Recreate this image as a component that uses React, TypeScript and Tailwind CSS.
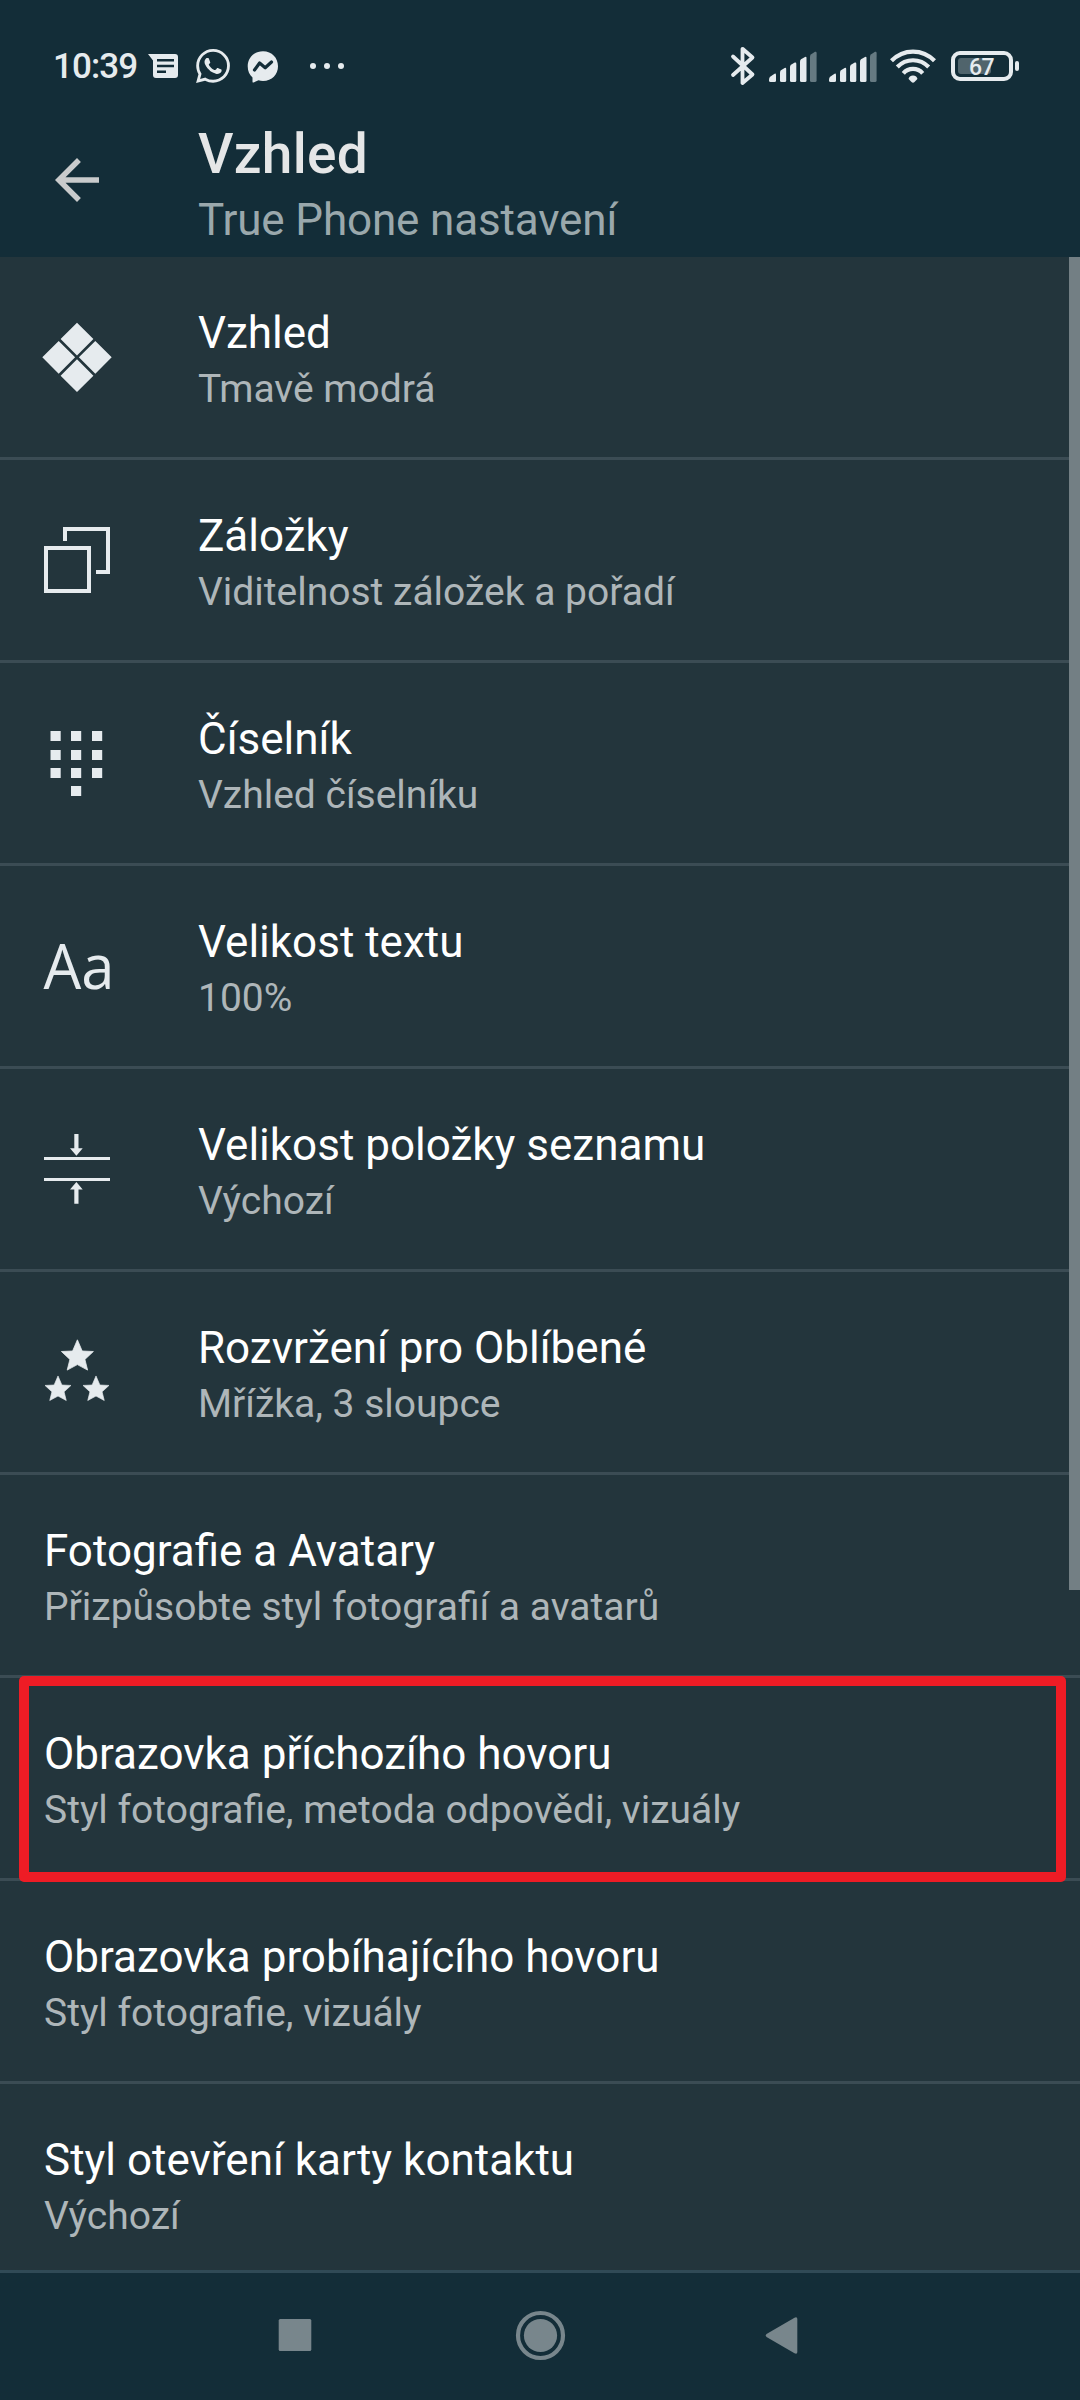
import type { ReactNode } from 'react';
import { SiWhatsapp } from 'react-icons/si';

type Setting = {
  title: string;
  summary: string;
  icon?: ReactNode;
  highlighted?: boolean;
};

const KEYPAD_DOTS = [
  [9.5, 4], [30, 4], [51, 4],
  [9.5, 23], [30, 23], [51, 23],
  [9.5, 41], [30, 41], [51, 41],
  [30, 59],
];

function RowIcon({ children }: { children: ReactNode }) {
  return (
    <svg viewBox="0 0 72 72" className="h-[72px] w-[72px] overflow-visible fill-[#e6ebee]">
      {children}
    </svg>
  );
}

const ThemeIcon = () => (
  <RowIcon>
    <path d="M36 1.7 52.4 18 36 34.4 19.6 18zM17.7 20 34.1 36.3 17.7 52.7 1.3 36.3zM54.3 20 70.7 36.3 54.3 52.7 37.9 36.3zM36 38.3 52.4 54.7 36 71 19.6 54.7z" />
  </RowIcon>
);

const TabsIcon = () => (
  <RowIcon>
    <g fill="none" stroke="#e6ebee" strokeWidth="4">
      <rect x="5" y="24" width="43" height="43" />
      <path d="M24 17V5H67V48H55" />
    </g>
  </RowIcon>
);

const KeypadIcon = () => (
  <RowIcon>
    {KEYPAD_DOTS.map(([x, y]) => (
      <rect key={`${x}-${y}`} x={x} y={y} width="10.2" height="10" />
    ))}
  </RowIcon>
);

const TextSizeIcon = () => (
  <RowIcon>
    <text
      x="2.5"
      y="58.5"
      fontSize="63"
      textLength="71"
      lengthAdjust="spacingAndGlyphs"
      className="font-['Open_Sans',sans-serif]"
    >
      Aa
    </text>
  </RowIcon>
);

const ItemSizeIcon = () => (
  <RowIcon>
    <path d="M3 24H69V27H3zM3 45H69V48H3z" />
    <path d="M33.3 1H37.5V15.3H41.7L35.4 22.7 29 15.3H33.3z" />
    <path d="M33.3 70.7H37.5V56.4H41.7L35.4 49 29 56.4H33.3z" />
  </RowIcon>
);

const STAR = 'M0-16.6 4.8-5.4 16-4.9 7.5 3 10.2 13.7 0 8.2-10.2 13.7-7.5 3-16-4.9-4.8-5.4z';

const StarsIcon = () => (
  <RowIcon>
    <g stroke="#e6ebee" strokeWidth="0.8" strokeLinejoin="round">
      <path d={STAR} transform="translate(36.4 20.4)" />
      <path d={STAR} transform="translate(17 53.4) scale(.81)" />
      <path d={STAR} transform="translate(55 53.4) scale(.81)" />
    </g>
  </RowIcon>
);

const SETTINGS: Setting[] = [
  { title: 'Vzhled', summary: 'Tmavě modrá', icon: <ThemeIcon /> },
  { title: 'Záložky', summary: 'Viditelnost záložek a pořadí', icon: <TabsIcon /> },
  { title: 'Číselník', summary: 'Vzhled číselníku', icon: <KeypadIcon /> },
  { title: 'Velikost textu', summary: '100%', icon: <TextSizeIcon /> },
  { title: 'Velikost položky seznamu', summary: 'Výchozí', icon: <ItemSizeIcon /> },
  { title: 'Rozvržení pro Oblíbené', summary: 'Mřížka, 3 sloupce', icon: <StarsIcon /> },
  { title: 'Fotografie a Avatary', summary: 'Přizpůsobte styl fotografií a avatarů' },
  {
    title: 'Obrazovka příchozího hovoru',
    summary: 'Styl fotografie, metoda odpovědi, vizuály',
    highlighted: true,
  },
  { title: 'Obrazovka probíhajícího hovoru', summary: 'Styl fotografie, vizuály' },
  { title: 'Styl otevření karty kontaktu', summary: 'Výchozí' },
];

function SignalBars() {
  return (
    <svg viewBox="0 0 48 32" className="h-8 w-12 fill-[#e6ebee]">
      <path d="M0 28.5Q0 26.8 1.5 25.6L5.2 22.9Q7 22 7 24V29.5Q7 31 5.5 31H1.5Q0 31 0 29.5z" />
      <path d="M11 21.5Q11 20 12 19.3L15.6 17Q17.2 16.3 17.2 18V29.5Q17.2 31 15.7 31H12.5Q11 31 11 29.5z" />
      <path d="M21 16Q21 14.5 22 13.8L25.8 11.6Q27.3 11 27.3 12.800V29.5Q27.3 31 25.8 31H22.5Q21 31 21 29.5z" />
      <path d="M31 10.500Q31 9 32 8.300L36 6Q37.5 5.400 37.5 7V29.5Q37.5 31 36 31H32.5Q31 31 31 29.5z" />
      <path
        d="M41 5.500Q41 4 42.2 3.200L46 .8Q47.6.2 47.6 2V29.5Q47.6 31 46 31H42.5Q41 31 41 29.5z"
        className="fill-[#667a82]"
      />
    </svg>
  );
}

function StatusBar() {
  return (
    <div className="flex h-[104px] items-start pt-[46px] pl-[53px] text-[#e6ebee]">
      <span className="mt-px w-[95px] text-[35px] leading-10 font-medium tracking-[-0.9px] whitespace-nowrap">
        10:39
      </span>
      <svg viewBox="0 0 30 24" className="mt-2 h-6 w-[30px] fill-current">
        <path
          fillRule="evenodd"
          d="M0 0H27Q30 0 30 3V21Q30 24 27 24H8Q5 24 5 21V6.5zM9 5V7.5H26V5zM9 10.7V13.2H26V10.7zM9 16.5V19H18V16.5z"
        />
      </svg>
      <SiWhatsapp className="mt-[3px] ml-[18px] h-[34px] w-[34px]" />
      <svg viewBox="0 0 32 32" className="mt-[5px] ml-[17px] h-8 w-8 fill-current">
        <path d="M16 0.3C25 .3 31 7 31 15.3S25 30 16 30Q13.500 30 11.500 29.300L6.500 31.600Q5.500 31.700 5.500 30.700V26.500C2.500 24 .7 20 .7 15.300.7 7 7 .3 16 .3z" />
        <path
          d="M7.500 19 12.600 12 18.200 16.800 24.500 11"
          fill="none"
          stroke="#132d38"
          strokeWidth="3.2"
          strokeLinejoin="round"
          strokeLinecap="round"
        />
      </svg>
      <div className="mt-[17px] ml-[31px] flex gap-2">
        <span className="h-1.5 w-1.5 rounded-full bg-current" />
        <span className="h-1.5 w-1.5 rounded-full bg-current" />
        <span className="h-1.5 w-1.5 rounded-full bg-current" />
      </div>

      <div className="mr-[61px] ml-auto flex items-start">
        <svg viewBox="0 0 26 40" className="h-10 w-[26px]">
          <path
            d="M3 10.500 22.500 28.500 12.500 37V2.800L22.500 11.500 3 29"
            fill="none"
            stroke="currentColor"
            strokeWidth="3.8"
            strokeLinecap="round"
            strokeLinejoin="round"
          />
        </svg>
        <div className="mt-[5px] ml-[13px] flex gap-3">
          <SignalBars />
          <SignalBars />
        </div>
        <svg viewBox="0 0 46 34" className="mt-[3px] ml-[13px] h-[34px] w-[46px]">
          <g fill="none" stroke="currentColor" strokeWidth="4.2">
            <path d="M1.500 11.800C13.500-.5 32.500-.5 44.500 11.800" />
            <path d="M7.300 18C16 9 30 9 38.700 18" />
            <path d="M13.300 24.300C18.500 18.500 27.500 18.500 32.700 24.300" />
          </g>
          <path d="M23 26.500C20.500 26.500 18.400 28.500 18.600 30L21.500 33Q23 34.300 24.500 33L27.400 30C27.600 28.500 25.500 26.500 23 26.500z" fill="currentColor" />
        </svg>
        <div className="mt-[5px] ml-[15px] flex items-center">
          <div className="flex h-[30px] w-[62px] items-center rounded-[9px] border-4 border-current p-[3px]">
            <div className="flex h-4 w-[33px] items-center justify-center rounded-[3px] bg-[#50646c]">
              <span className="mt-[3px] -mr-[14px] text-[23px] leading-4 font-medium tracking-[-0.5px]">
                67
              </span>
            </div>
          </div>
          <div className="ml-0.5 h-[10px] w-1 rounded-sm bg-current" />
        </div>
      </div>
    </div>
  );
}

function Header() {
  return (
    <header className="flex h-[153px]">
      <div className="w-[198px] pt-[43px] pl-[44px]">
        <svg viewBox="0 0 24 24" className="h-[66px] w-[66px] fill-[#c9cbcc]">
          <path d="M20 11H7.830l5.590-5.590L12 4l-8 8 8 8 1.410-1.410L7.830 13H20z" />
        </svg>
      </div>
      <div className="pt-5">
        <h1 className="text-[55px] leading-[60px] font-medium tracking-[0.3px] text-[#e5e6e7]">
          Vzhled
        </h1>
        <p className="text-[44px] leading-[72px] tracking-[-0.15px] text-[#9aa8ac]">
          True Phone nastavení
        </p>
      </div>
    </header>
  );
}

function SettingRow({ title, summary, icon, highlighted }: Setting) {
  return (
    <li className="relative flex h-[203px] shrink-0 border-b-3 border-[#3b4c54]">
      {icon ? (
        <div className="flex w-[198px] items-center pl-[41px]">{icon}</div>
      ) : (
        <div className="w-11" />
      )}
      <div className="pt-[50px] whitespace-nowrap">
        <h2 className="text-[44px] leading-[52px] text-white">{title}</h2>
        <p className="text-[39px] leading-[60px] text-[#aeb6b9]">{summary}</p>
      </div>
      {highlighted && (
        <div className="absolute -top-0.5 left-[19px] z-10 h-[206px] w-[1047px] rounded-[5px] border-[10px] border-[#ee1c25]" />
      )}
    </li>
  );
}

function NavBar() {
  return (
    <nav className="h-[130px] border-t-3 border-[#304a56]">
      <svg viewBox="0 0 1080 127" className="h-[127px] w-full fill-[#78868c]">
        <rect x="278.700" y="46" width="32.600" height="32" rx="1.500" />
        <circle cx="540.500" cy="62.500" r="22.500" fill="none" stroke="#78868c" strokeWidth="4.200" />
        <circle cx="540.500" cy="62.500" r="16.600" />
        <path d="M766.500 61 794.500 44.700Q797.300 43.500 797.300 46V79Q797.300 81.500 794.500 80.300L766.500 64Q764.700 62.500 766.500 61z" />
      </svg>
    </nav>
  );
}

export default function App() {
  return (
    <div className="flex h-[2400px] w-[1080px] flex-col overflow-hidden bg-[#132d38] font-['Roboto',sans-serif]">
      <StatusBar />
      <Header />
      <main className="relative h-[2013px] overflow-hidden bg-[#23353c]">
        <ul className="flex flex-col">
          {SETTINGS.map((setting) => (
            <SettingRow key={setting.title} {...setting} />
          ))}
        </ul>
        <div className="absolute top-0 right-0 h-[1333px] w-[11px] bg-[#737f84]" />
      </main>
      <NavBar />
    </div>
  );
}
